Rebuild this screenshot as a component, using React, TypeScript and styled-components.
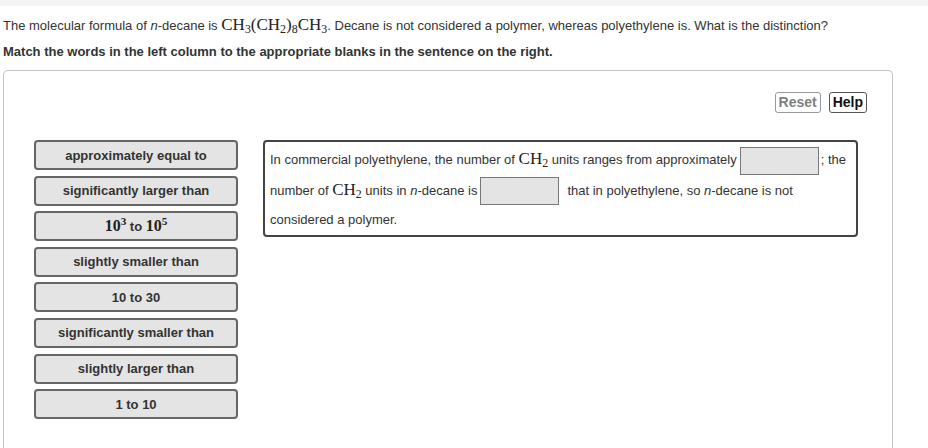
import React from 'react';
import styled, { createGlobalStyle } from 'styled-components';

const GlobalStyle = createGlobalStyle`
    html, body {
        margin: 0;
        padding: 0;
        background: #fff;
        overflow: hidden;
    }
    body {
        font-family: "Liberation Sans", Arial, sans-serif;
        font-size: 13px;
        color: #333;
    }
`;

const TopBand = styled.div`
    height: 6px;
    background: #f4f4f4;
`;

const Page = styled.div`
    padding: 0 35px 0 3px;
`;

const Prompt = styled.p`
    margin: 9px 0 0;
    line-height: 20px;
    font-size: 13px;
`;

const Instruction = styled.p`
    margin: 6px 0 0;
    line-height: 20px;
    font-weight: bold;
    font-size: 13px;
`;

const Math = styled.span<{ size?: number }>`
    font-family: "Liberation Serif", "Times New Roman", serif;
    font-size: ${p => p.size || 17}px;
    color: #222;
    sub, sup {
        font-size: 70%;
        line-height: 0;
    }
    sub {
        vertical-align: -0.25em;
    }
`;

const Panel = styled.div`
    margin-top: 8px;
    border: 1px solid #c4c4c4;
    border-bottom: none;
    border-radius: 5px 5px 0 0;
    height: 380px;
    box-sizing: border-box;
    padding: 21px 25px 0 30px;
`;

const Toolbar = styled.div`
    display: flex;
    justify-content: flex-end;
    gap: 8px;
`;

const ToolButton = styled.button<{ disabled?: boolean }>`
    font-family: "Liberation Sans", Arial, sans-serif;
    font-size: 14px;
    font-weight: bold;
    height: 21px;
    padding: 0 3px;
    background: #fff;
    border-radius: 3px;
    border: 1px solid ${p => (p.disabled ? '#999' : '#555')};
    color: ${p => (p.disabled ? '#808080' : '#111')};
    line-height: 19px;
`;

const Workspace = styled.div`
    display: flex;
    align-items: flex-start;
    gap: 25px;
    margin-top: 27px;
`;

const WordColumn = styled.div`
    display: flex;
    flex-direction: column;
    gap: 5.6px;
    width: 204px;
`;

const WordTile = styled.div`
    height: 30px;
    box-sizing: border-box;
    border: 2px solid #666;
    border-radius: 4px;
    background: #e4e4e4;
    display: flex;
    align-items: center;
    justify-content: center;
    font-weight: bold;
    font-size: 13px;
    color: #333;
`;

const Sentence = styled.div`
    width: 595px;
    box-sizing: border-box;
    border: 2px solid #444;
    border-radius: 4px;
    padding: 3px 5px 2px;
    line-height: 27px;
    font-size: 13px;
    color: #333;
`;

const Blank = styled.span<{ after?: number }>`
    display: inline-block;
    width: 79px;
    height: 28px;
    box-sizing: border-box;
    border: 1px solid #777;
    background: #e4e4e4;
    vertical-align: middle;
    margin: 1px ${p => p.after ?? 3}px 1px 3px;
`;

const words = [
    'approximately equal to',
    'significantly larger than',
    'powers',
    'slightly smaller than',
    '10 to 30',
    'significantly smaller than',
    'slightly larger than',
    '1 to 10',
];

export default function App() {
    return (
        <>
            <GlobalStyle />
            <TopBand />
            <Page>
                <Prompt>
                    The molecular formula of <i>n</i>-decane is{' '}
                    <Math>CH<sub>3</sub>(CH<sub>2</sub>)<sub>8</sub>CH<sub>3</sub></Math>. Decane is not
                    considered a polymer, whereas polyethylene is. What is the distinction?
                </Prompt>
                <Instruction>
                    Match the words in the left column to the appropriate blanks in the sentence on the right.
                </Instruction>
                <Panel>
                    <Toolbar>
                        <ToolButton disabled>Reset</ToolButton>
                        <ToolButton>Help</ToolButton>
                    </Toolbar>
                    <Workspace>
                        <WordColumn>
                            {words.map(w => (
                                <WordTile key={w}>
                                    {w === 'powers' ? (
                                        <span>
                                            <Math size={16}>10<sup>3</sup></Math> to{' '}
                                            <Math size={16}>10<sup>5</sup></Math>
                                        </span>
                                    ) : w}
                                </WordTile>
                            ))}
                        </WordColumn>
                        <Sentence>
                            In commercial polyethylene, the number of <Math>CH<sub>2</sub></Math> units ranges from
                            approximately<Blank after={2} />; the number of <Math>CH<sub>2</sub></Math> units in{' '}
                            <i>n</i>-decane is<Blank after={8} />that in polyethylene, so <i>n</i>-decane is not
                            considered a polymer.
                        </Sentence>
                    </Workspace>
                </Panel>
            </Page>
        </>
    );
}
